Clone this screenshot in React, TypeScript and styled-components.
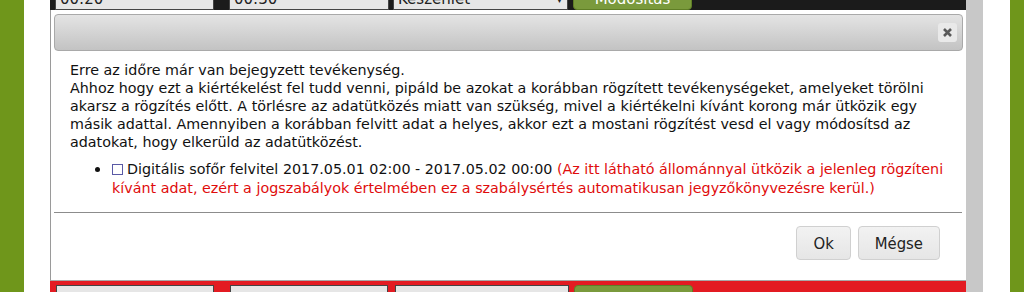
import React from "react";
import styled, { createGlobalStyle } from "styled-components";

const GlobalStyle = createGlobalStyle`
  html, body {
    margin: 0;
    padding: 0;
    background: #ffffff;
    overflow: hidden;
  }
  body {
    font-family: "DejaVu Sans", Verdana, sans-serif;
  }
`;

const Page = styled.div`
  display: flex;
  height: 292px;
  width: 1024px;
`;

const GreenStrip = styled.div<{ $w: number }>`
  width: ${(p) => p.$w}px;
  flex: none;
  background: #6f961b;
`;

const Gap = styled.div<{ $w: number }>`
  width: ${(p) => p.$w}px;
  flex: none;
  background: #ffffff;
`;

const ScrollTrack = styled.div`
  width: 17px;
  flex: none;
  background: #c8c8c8;
`;

const Main = styled.div`
  width: 916px;
  flex: none;
  display: flex;
  flex-direction: column;
`;

const TableRow = styled.div<{ $bg: string; $h: number; $top?: boolean }>`
  height: ${(p) => p.$h}px;
  flex: none;
  background: ${(p) => p.$bg};
  overflow: hidden;
  display: flex;
  align-items: ${(p) => (p.$top ? "flex-start" : "flex-end")};
  padding-top: ${(p) => (p.$top ? "4px" : "0")};
  box-sizing: border-box;
`;

const Field = styled.div<{ $w: number; $ml: number }>`
  width: ${(p) => p.$w}px;
  margin-left: ${(p) => p.$ml}px;
  height: 30px;
  flex: none;
  box-sizing: border-box;
  background: #e6e6e6;
  border: 1px solid #444;
  color: #222;
  font-size: 15px;
  line-height: 15px;
  padding: 0 4px 2px;
  display: flex;
  align-items: flex-end;
  justify-content: space-between;
`;

const GreenButton = styled.div<{ $ml: number }>`
  width: 119px;
  margin-left: ${(p) => p.$ml}px;
  height: 30px;
  flex: none;
  box-sizing: border-box;
  background: #7a9a3c;
  border: 1px solid #5f7e25;
  border-radius: 4px;
  color: #ffffff;
  font-size: 15px;
  line-height: 15px;
  padding-bottom: 2px;
  display: flex;
  align-items: flex-end;
  justify-content: center;
`;

const Dialog = styled.div`
  flex: 1;
  background: #ffffff;
  border-left: 1px solid #9a9a9a;
  border-bottom: 1px solid #a8a8a8;
  padding: 4px 3px 0 3px;
  display: flex;
  flex-direction: column;
`;

const TitleBar = styled.div`
  height: 37px;
  box-sizing: border-box;
  border: 1px solid #a9a9a9;
  border-radius: 4px;
  background: linear-gradient(#e4e4e4, #c3c3c3);
  display: flex;
  align-items: center;
  justify-content: flex-end;
  padding-right: 5px;
`;

const CloseButton = styled.div`
  width: 19px;
  height: 19px;
  border-radius: 3px;
  background: #e9e9e9;
  display: flex;
  align-items: center;
  justify-content: center;
`;

const Content = styled.div`
  padding: 10px 16px 0 16px;
  height: 161px;
  box-sizing: border-box;
  font-size: 14.3px;
  line-height: 18px;
  color: #111;
`;

const List = styled.ul`
  margin: 8px 0 0 0;
  padding-left: 42px;
`;

const Item = styled.li`
  line-height: 19px;
  &::marker {
    font-size: 17px;
  }
`;

const Check = styled.span`
  display: inline-block;
  width: 9px;
  height: 9px;
  border: 1px solid #5a5aa6;
  margin-right: 4px;
  vertical-align: -1px;
`;

const Warn = styled.span`
  color: #e00c0c;
`;

const Separator = styled.div`
  height: 1px;
  background: #8c8c8c;
  margin-right: 1px;
`;

const ButtonPane = styled.div`
  display: flex;
  justify-content: flex-end;
  gap: 7px;
  padding: 13px 23px 0 0;
`;

const DialogButton = styled.button`
  height: 34px;
  padding: 0 16px;
  border: 1px solid #d0d0d0;
  border-radius: 4px;
  background: linear-gradient(#f2f2f2, #e6e6e6);
  font-family: "DejaVu Sans Condensed", "DejaVu Sans", sans-serif;
  font-size: 16.5px;
  color: #222;
`;

export default function App() {
  return (
    <>
      <GlobalStyle />
      <Page>
        <GreenStrip $w={24} />
        <Gap $w={26} />
        <Main>
          <TableRow $bg="#1b1b1b" $h={10}>
            <Field $w={159} $ml={5}>00:20</Field>
            <Field $w={160} $ml={15}>00:30</Field>
            <Field $w={175} $ml={4}>
              <span>Készenlét</span>
              <span style={{ fontSize: 9 }}>▼</span>
            </Field>
            <GreenButton $ml={5}>Módosítás</GreenButton>
          </TableRow>
          <Dialog>
            <TitleBar>
              <CloseButton>
                <svg width="11" height="11" viewBox="0 0 11 11">
                  <path d="M2 2 L9 9 M9 2 L2 9" stroke="#595959" strokeWidth="2.6" strokeLinecap="butt" />
                </svg>
              </CloseButton>
            </TitleBar>
            <Content>
              Erre az időre már van bejegyzett tevékenység.
              <br />
              Ahhoz hogy ezt a kiértékelést fel tudd venni, pipáld be azokat a korábban rögzített tevékenységeket, amelyeket törölni akarsz a rögzítés előtt. A törlésre az adatütközés miatt van szükség, mivel a kiértékelni kívánt korong már ütközik egy másik adattal. Amennyiben a korábban felvitt adat a helyes, akkor ezt a mostani rögzítést vesd el vagy módosítsd az adatokat, hogy elkerüld az adatütközést.
              <List>
                <Item>
                  <Check />
                  Digitális sofőr felvitel 2017.05.01 02:00 - 2017.05.02 00:00{" "}
                  <Warn>
                    (Az itt látható állománnyal ütközik a jelenleg rögzíteni kívánt adat, ezért a jogszabályok értelmében ez a szabálysértés automatikusan jegyzőkönyvezésre kerül.)
                  </Warn>
                </Item>
              </List>
            </Content>
            <Separator />
            <ButtonPane>
              <DialogButton>Ok</DialogButton>
              <DialogButton>Mégse</DialogButton>
            </ButtonPane>
          </Dialog>
          <TableRow $bg="#e31b22" $h={11} $top>
            <Field $w={158} $ml={6}> </Field>
            <Field $w={158} $ml={16}> </Field>
            <Field $w={174} $ml={7}> </Field>
            <GreenButton $ml={5}> </GreenButton>
          </TableRow>
        </Main>
        <ScrollTrack />
        <Gap $w={27} />
        <GreenStrip $w={14} />
      </Page>
    </>
  );
}
